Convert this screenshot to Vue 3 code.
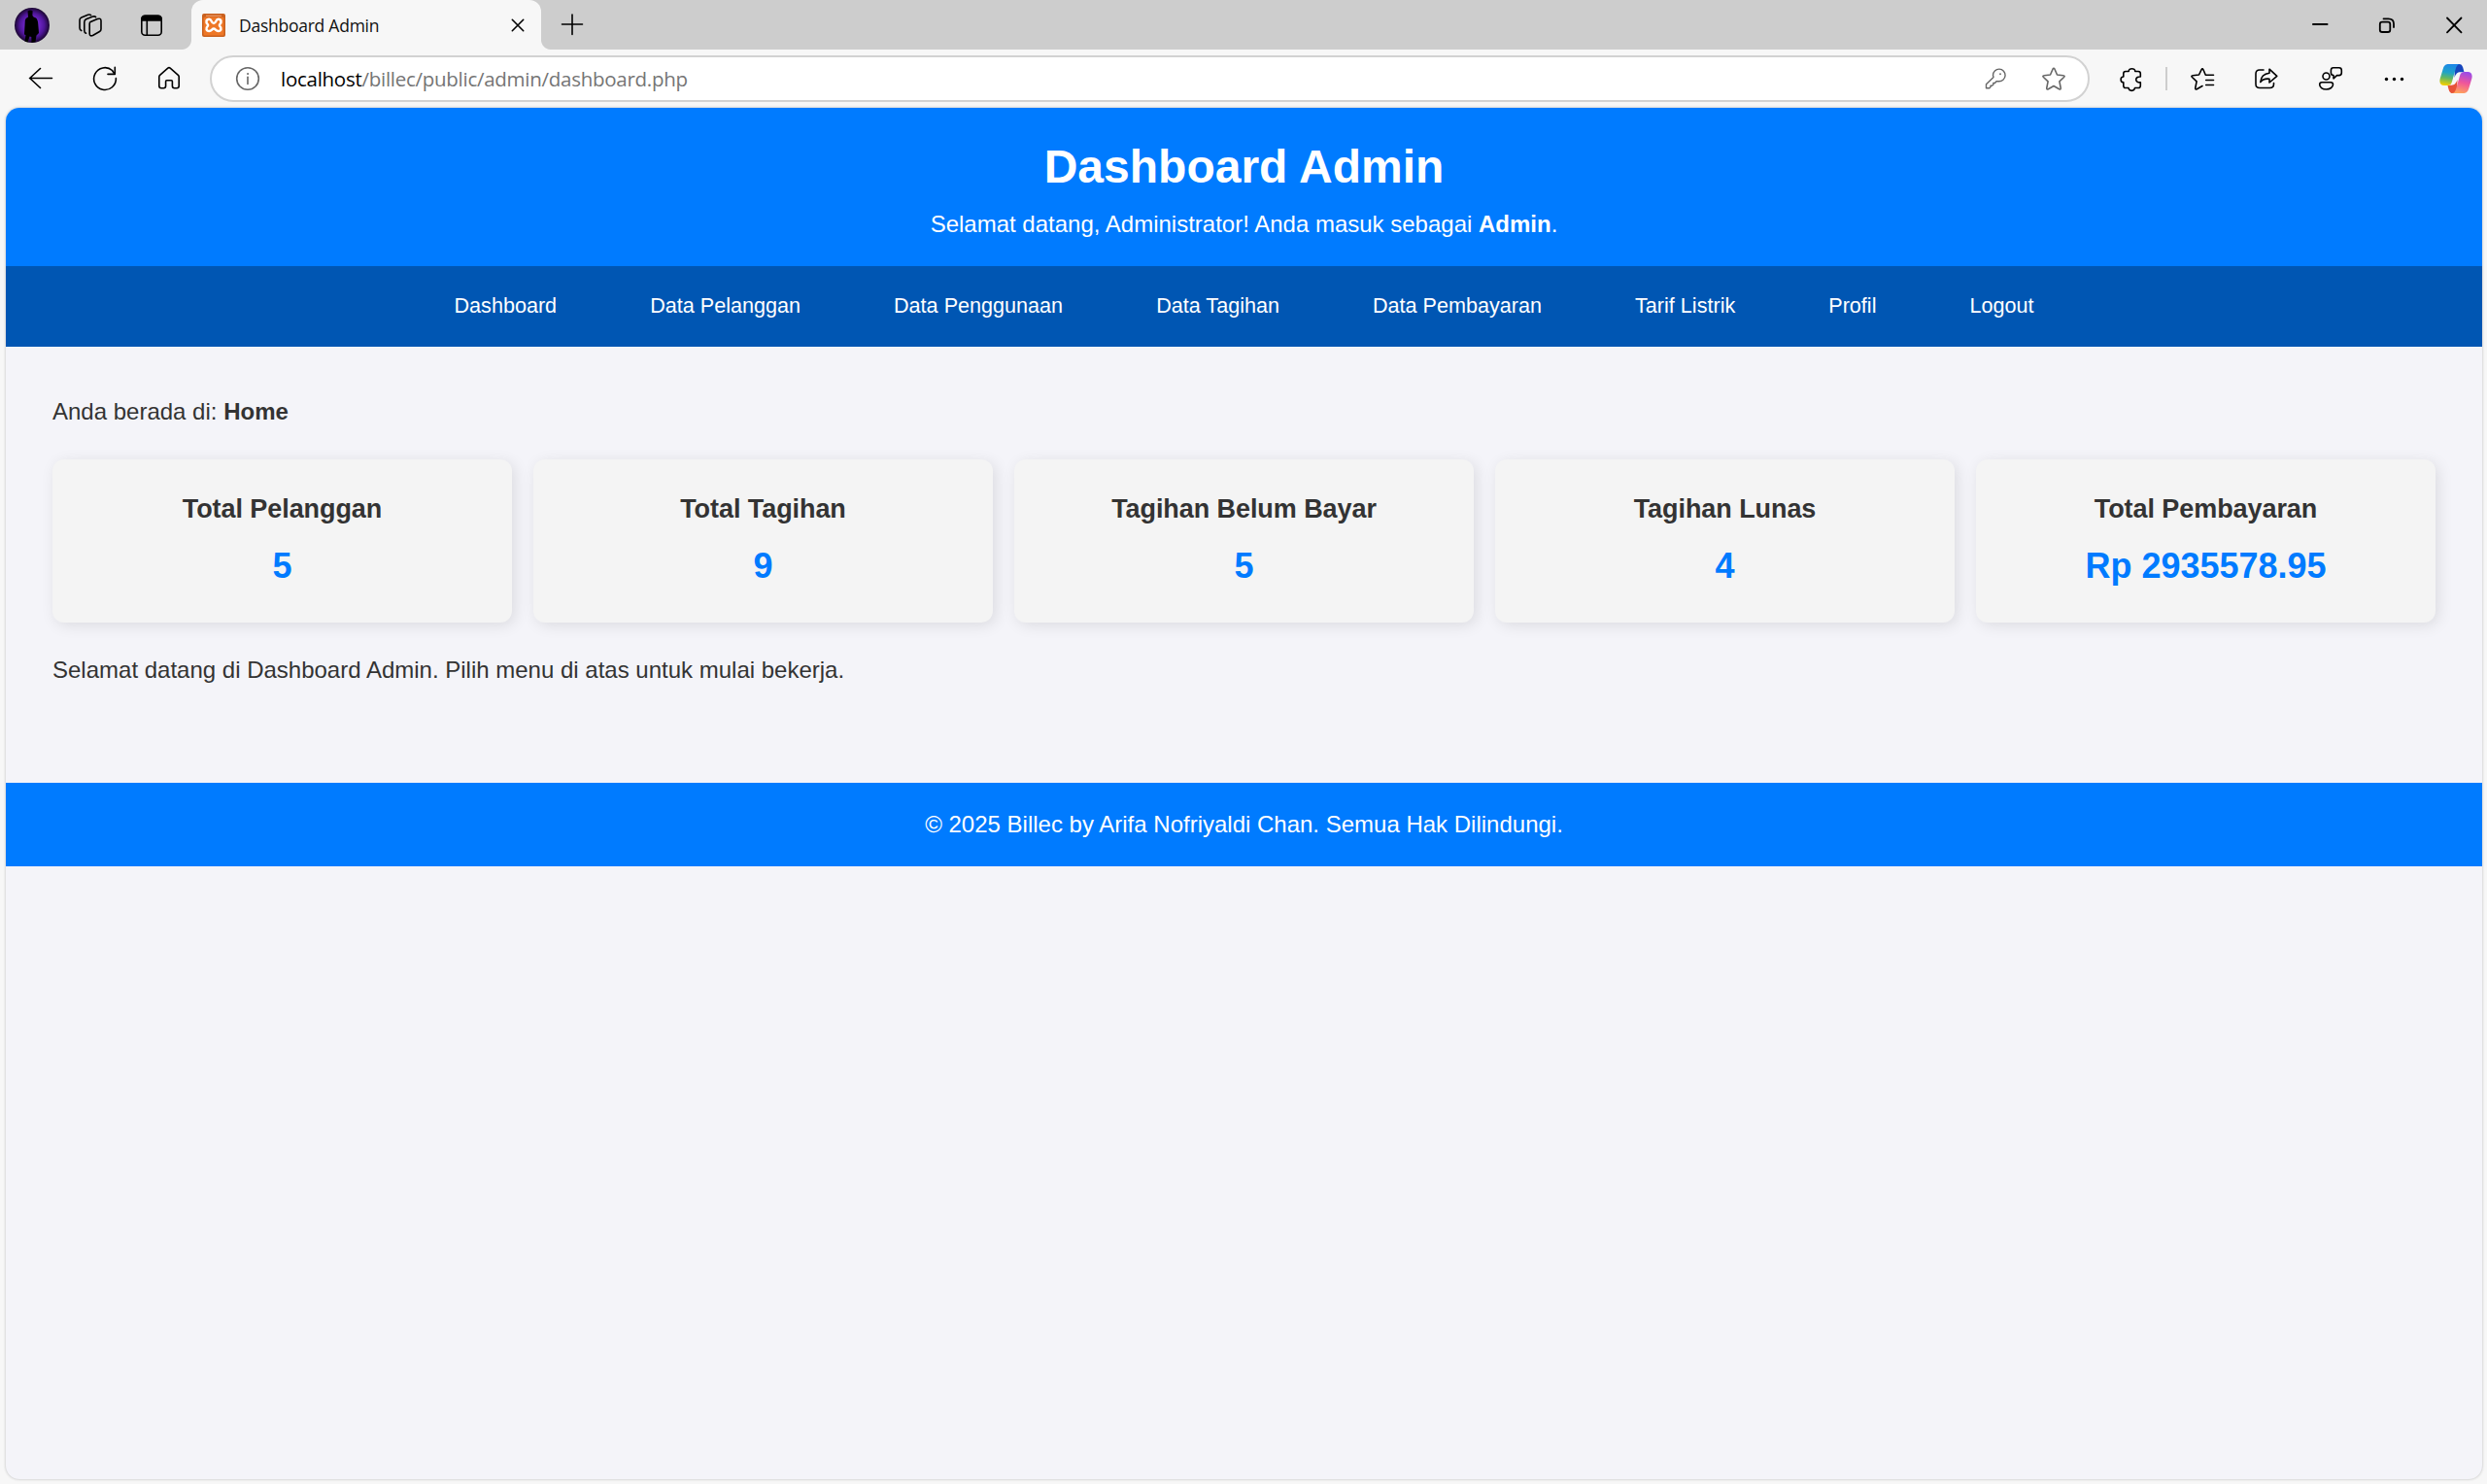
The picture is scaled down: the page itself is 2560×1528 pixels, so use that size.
<script setup>
const menu = [
  'Dashboard',
  'Data Pelanggan',
  'Data Penggunaan',
  'Data Tagihan',
  'Data Pembayaran',
  'Tarif Listrik',
  'Profil',
  'Logout',
]

const cards = [
  { title: 'Total Pelanggan', value: '5' },
  { title: 'Total Tagihan', value: '9' },
  { title: 'Tagihan Belum Bayar', value: '5' },
  { title: 'Tagihan Lunas', value: '4' },
  { title: 'Total Pembayaran', value: 'Rp 2935578.95' },
]
</script>

<template>
  <div class="window">
    <div class="tabstrip">
      <svg class="avatar" viewBox="0 0 36 36">
        <defs>
          <radialGradient id="aura" cx=".5" cy=".5" r=".5">
            <stop offset=".3" stop-color="#7a2bd6" />
            <stop offset=".7" stop-color="#4f1699" />
            <stop offset="1" stop-color="#1a0530" />
          </radialGradient>
        </defs>
        <circle cx="18" cy="18" r="18" fill="url(#aura)" />
        <path d="M13.500 3.500Q16 1.500 18.600 3.200L18.400 8Q19 9.500 22 10.500Q24 12 24.300 17L25 26L22.500 28.500L21.500 35L17.500 36L17.300 30L15.500 29.500L13.500 35.500L10.500 34.500L11.500 28L10 27.500L10.800 13Q11 10.500 14 9.500Z" fill="#000" />
      </svg>
      <svg class="icon workspaces" viewBox="0 0 30 30">
        <path d="M15.300 11.400 22.300 8.500Q26 7.300 26 10.500V19Q26 20.800 24.500 21.500L17.500 25.500Q14.200 26.800 14.200 23.500V13.500Q14.200 12 15.300 11.400Z" />
        <path d="M10.500 23.300Q8.800 22.800 8.800 20.500V12Q8.800 9.700 10.600 8.800L17.500 6.100Q19.600 5.400 20.600 6.600" />
        <path d="M5.800 20.600Q4 20 4 17.800V9.700Q4 7.700 5.800 6.900L12.500 4.300Q14.400 3.700 15.600 4.600" />
      </svg>
      <svg class="icon sidebar" viewBox="0 0 30 30">
        <rect x="4.800" y="5.300" width="20.400" height="20" rx="3.500" />
        <path d="M4.800 10V9Q4.800 5.300 8.500 5.300H21.500Q25.200 5.300 25.200 9V10Z" fill="#000" />
        <path d="M10.300 10V25" />
      </svg>
      <div class="tab">
        <svg class="favicon" viewBox="0 0 24 24">
          <rect width="24" height="24" rx="2" fill="#c9611f" />
          <rect x="1.500" y="3.500" width="21" height="19" rx="1.500" fill="#ee7726" />
          <path d="M4 2.200H20" stroke="#f2a678" stroke-width="1" />
          <path d="M7.300 5.700C4.200 5.700 3.500 9 5.800 11.200Q6.500 12 5.800 12.800C3.500 15 4.300 18 7.300 18C9.800 18 10.300 15.500 12 15.500S14.200 18 16.700 18C19.700 18 20.500 15 18.200 12.800Q17.500 12 18.200 11.200C20.500 9 19.800 5.700 16.700 5.700C13.800 5.700 14.800 10 12 10S10.200 5.700 7.300 5.700Z" fill="none" stroke="#fff" stroke-width="2.500" stroke-linejoin="round" />
        </svg>
        <span class="tab-title">Dashboard Admin</span>
        <svg class="icon tab-close" viewBox="0 0 30 30"><path d="M9.300 9.300 20.700 20.700M20.700 9.300 9.300 20.700" /></svg>
      </div>
      <svg class="icon new-tab" viewBox="0 0 30 30"><path d="M4.500 14H25.500M15 4V24.500" /></svg>
      <div class="spacer"></div>
      <svg class="icon control" viewBox="0 0 30 30"><path d="M7 14H21.500" stroke-width="2" /></svg>
      <svg class="icon control" viewBox="0 0 30 30">
        <rect x="6.800" y="11.700" width="10.500" height="10.300" rx="2.300" stroke-width="1.800" />
        <path d="M10.500 8.300H15.500Q21 8.300 21 13.500V17" stroke-width="1.800" />
      </svg>
      <svg class="icon control" viewBox="0 0 30 30"><path d="M7 7.500 21.500 22.300M21.500 7.500 7 22.300" stroke-width="1.800" /></svg>
    </div>

    <div class="toolbar">
      <svg class="icon" viewBox="0 0 30 30"><path d="M3.500 14.500H26.500M14.500 4.500 3.700 14.500 14.500 24.500" /></svg>
      <svg class="icon" viewBox="0 0 30 30">
        <path d="M26.400 14.500A11.400 11.400 0 1 1 22.500 6.500L25 10.200" />
        <path d="M25.300 3.300V10.400H18" />
      </svg>
      <svg class="icon" viewBox="0 0 30 30">
        <path d="M4.800 13Q4.800 12 5.600 11.300L13.800 4.200Q15 3.200 16.200 4.200L24.400 11.300Q25.200 12 25.200 13V22.500Q25.200 24.700 23 24.700H20.500Q18.400 24.700 18.400 22.500V17.800Q18.400 16.700 17.300 16.700H12.700Q11.600 16.700 11.600 17.800V22.500Q11.600 24.700 9.500 24.700H7Q4.800 24.700 4.800 22.500Z" />
      </svg>
      <div class="address">
        <svg class="icon muted" viewBox="0 0 30 30">
          <circle cx="15" cy="15" r="11.300" />
          <path d="M15 13.300V20.500" />
          <circle cx="15" cy="10" r=".6" fill="#666" stroke-width=".8" />
        </svg>
        <div class="url"><span class="host">localhost</span>/billec/public/admin/dashboard.php</div>
        <svg class="icon muted key" viewBox="0 0 30 30">
          <path d="M12.500 11.500A6.300 6.300 0 1 1 18.200 17.700L16 17.800 14.500 19.500H12.800V21.300L11.500 22.300H10V23.500L8.800 24.700H5.500V20.800L13 13.500Z" stroke-width="1.400" />
          <circle cx="20" cy="10.300" r="1" fill="#777" stroke="none" />
        </svg>
        <svg class="icon muted" viewBox="0 0 30 30">
          <path d="M14 5.200Q15 3.500 16 5.200L18.500 11 24.800 11.700Q27 12 25.500 13.500L20.900 17.900 22.200 24.500Q22.400 26.500 20.600 25.700L15 22.500 9.400 25.700Q7.600 26.500 7.800 24.500L9.100 17.900 4.500 13.500Q3 12 5.200 11.700L11.500 11Z" />
        </svg>
      </div>
      <svg class="icon puzzle" viewBox="0 0 30 30">
        <path d="M9 7.500H12.200C12 3.800 19 3.800 18.800 7.500H22Q24.300 7.500 24.300 9.800V13C18.200 12.500 18.200 19.300 24.300 18.800V22.200Q24.300 24.500 22 24.500H18.500C18 28.300 12.500 28.300 12 24.500H9Q6.800 24.500 6.800 22.200V18.800C3.200 18.800 3.200 13 6.800 13V9.800Q6.800 7.500 9 7.500Z" />
      </svg>
      <div class="divider"></div>
      <svg class="icon" viewBox="0 0 30 30">
        <path d="M15 22.500 9.400 25.700Q7.600 26.500 7.800 24.500L9.100 17.900 4.500 13.500Q3 12 5.200 11.700L11.500 11 14 5.800Q15 4 16 5.800L18.300 11.300H26.500M18.700 16.500H26.500M18.700 21.500H26.500" />
      </svg>
      <svg class="icon share" viewBox="0 0 30 30">
        <path d="M12 6H8Q4 6 4 10V20.500Q4 24.500 8 24.500H18.500Q22.500 24.500 22.500 20.500V19.500" />
        <path d="M18 5.200 25.800 12.300 18 19V15.200Q11.500 14.500 8.800 18.500Q9.500 10.300 18 9.300Z" />
      </svg>
      <svg class="icon feedback" viewBox="0 0 30 30">
        <circle cx="10.500" cy="12.500" r="3.500" />
        <path d="M6 18.700H15Q17.500 18.700 17.500 21C17.500 23.700 14.500 26 10.500 26S3.700 23.700 3.700 21Q3.700 18.700 6 18.700Z" />
        <path d="M17.800 3.800H23.700Q26.300 3.800 26.300 6.400V9Q26.300 11.600 23.700 11.600H21.500L18 14.800V11.600Q15.400 11.400 15.400 9V6.400Q15.400 3.800 17.800 3.800Z" />
      </svg>
      <svg class="icon more" viewBox="0 0 30 30">
        <g fill="#000" stroke="none"><circle cx="6.500" cy="15.500" r="1.700" /><circle cx="14.500" cy="15.500" r="1.700" /><circle cx="22.500" cy="15.500" r="1.700" /></g>
      </svg>
      <svg class="copilot" viewBox="0 0 34 30">
        <defs>
          <linearGradient id="cool" x1=".5" y1="0" x2=".35" y2="1">
            <stop offset="0" stop-color="#1c86e8" /><stop offset=".4" stop-color="#1fa3c8" />
            <stop offset=".65" stop-color="#5fb767" /><stop offset="1" stop-color="#f5d000" />
          </linearGradient>
          <linearGradient id="warm" x1=".65" y1="0" x2=".4" y2="1">
            <stop offset="0" stop-color="#9a4be8" /><stop offset=".5" stop-color="#f0569a" />
            <stop offset="1" stop-color="#ffa35c" />
          </linearGradient>
        </defs>
        <path d="M16 0H20.500C23.500 0 24.300 3 25.500 8.300H21.500C18.500 8.300 17 10 15.500 14Z" fill="#1746bd" />
        <path d="M18 30H13.500C10.500 30 9.700 27 8.500 21.700H12.500C15.500 21.700 17 20 18.500 16Z" fill="#e85338" />
        <path d="M9.500 0H21.500C18.700 0 17.500 2 16.700 5L13 18C12.100 21 10.800 22 8 22H5C1 22-.3 19 .7 15L3.700 5C4.800 1.200 6.800 0 9.500 0Z" fill="url(#cool)" />
        <path d="M24.500 30H12.500C15.300 30 16.500 28 17.300 25L21 12C21.900 9 23.200 8 26 8H29C33 8 34.300 11 33.300 15L30.300 25C29.200 28.800 27.200 30 24.500 30Z" fill="url(#warm)" />
      </svg>
    </div>

    <div class="page">
      <header class="hero">
        <h1>Dashboard Admin</h1>
        <p>Selamat datang, Administrator! Anda masuk sebagai <strong>Admin</strong>.</p>
      </header>
      <nav class="menu">
        <a v-for="item in menu" :key="item">{{ item }}</a>
      </nav>
      <main class="content">
        <p class="crumb">Anda berada di: <strong>Home</strong></p>
        <div class="cards">
          <section v-for="card in cards" :key="card.title" class="card">
            <h3>{{ card.title }}</h3>
            <p>{{ card.value }}</p>
          </section>
        </div>
        <p class="welcome">Selamat datang di Dashboard Admin. Pilih menu di atas untuk mulai bekerja.</p>
      </main>
      <footer class="footer">© 2025 Billec by Arifa Nofriyaldi Chan. Semua Hak Dilindungi.</footer>
    </div>
  </div>
</template>

<style>
body {
  margin: 0;
  background: #f7f7f7;
}
</style>

<style scoped>
* {
  box-sizing: border-box;
}
h1,
h3,
p {
  margin: 0;
}
.window {
  display: flex;
  flex-direction: column;
  width: 2560px;
  height: 1528px;
  background: #f7f7f7;
  overflow: hidden;
}
.icon {
  flex: none;
  width: 30px;
  height: 30px;
  fill: none;
  stroke: #000;
  stroke-width: 1.6;
  stroke-linecap: round;
  stroke-linejoin: round;
}
.muted {
  stroke: #666;
}

/* Tab strip */
.tabstrip {
  display: flex;
  align-items: center;
  height: 51px;
  padding: 0 18px 0 15px;
  background: #cdcdcd;
}
.avatar {
  flex: none;
  width: 36px;
  height: 36px;
}
.workspaces {
  margin-left: 27px;
}
.sidebar {
  margin-left: 33px;
}
.tab {
  position: relative;
  display: flex;
  align-items: center;
  width: 360px;
  height: 51px;
  margin-left: 26px;
  padding: 0 8px 0 11px;
  border-radius: 12px 12px 0 0;
  background: #f7f7f7;
}
.tab::before,
.tab::after {
  content: '';
  position: absolute;
  bottom: 0;
  width: 10px;
  height: 10px;
}
.tab::before {
  left: -10px;
  background: radial-gradient(circle at 0 0, #cdcdcd 9.5px, #f7f7f7 10.5px);
}
.tab::after {
  right: -10px;
  background: radial-gradient(circle at 100% 0, #cdcdcd 9.5px, #f7f7f7 10.5px);
}
.favicon {
  flex: none;
  width: 24px;
  height: 24px;
}
.tab-title {
  flex: 1;
  margin-left: 14px;
  font: 17.5px/24px 'Open Sans', sans-serif;
  letter-spacing: -0.25px;
  color: #111;
}
.tab-close {
  margin-right: 1px;
}
.new-tab {
  margin-left: 17px;
}
.spacer {
  flex: 1;
}
.control + .control {
  margin-left: 39px;
}

/* Toolbar */
.toolbar {
  display: flex;
  align-items: center;
  height: 60px;
  padding: 0 15px 0 27px;
}
.toolbar > .icon + .icon {
  margin-left: 36px;
}
.address {
  flex: 1;
  display: flex;
  align-items: center;
  height: 48px;
  margin: 0 28px 0 27px;
  padding: 0 20px 0 22px;
  border: 2px solid #d2d2d2;
  border-radius: 24px;
  background: #fff;
}
.url {
  flex: 1;
  margin-left: 19px;
  font: 20.5px/30px 'Open Sans', sans-serif;
  letter-spacing: -0.27px;
  color: #757575;
}
.host {
  color: #000;
}
.key {
  margin-right: 30px;
}
.divider {
  width: 2px;
  height: 24px;
  margin: 0 21px 0 20px;
  background: #cdcdcd;
}
.toolbar > .share + .feedback {
  margin-left: 36px;
}
.copilot {
  flex: none;
  width: 34px;
  height: 30px;
  margin-left: 31px;
}

/* Web page */
.page {
  width: 2549px;
  height: 1412px;
  margin: 0 5px 0 6px;
  border-radius: 14px;
  background: #f4f4f9;
  box-shadow: 0 0 3px rgba(0, 0, 0, 0.25);
  overflow: hidden;
  font-family: 'Liberation Sans', Arial, sans-serif;
  font-size: 24px;
  line-height: 28px;
  color: #333;
}
.hero {
  height: 163px;
  padding-top: 33px;
  background: #007bff;
  color: #fff;
  text-align: center;
}
.hero h1 {
  font-size: 48px;
  line-height: 56px;
}
.hero p {
  margin-top: 17px;
}
.menu {
  display: flex;
  justify-content: center;
  gap: 96px;
  height: 83px;
  padding-top: 28px;
  background: #0056b3;
  color: #fff;
  font-size: 21.6px;
  line-height: 26px;
}
.content {
  height: 449px;
  padding: 53px 48px 0;
}
.cards {
  display: grid;
  grid-template-columns: repeat(5, 1fr);
  gap: 22px;
  margin-top: 35px;
}
.card {
  height: 168px;
  padding-top: 35px;
  border-radius: 12px;
  background: #f4f4f4;
  box-shadow: 3px 3px 15px rgba(0, 0, 0, 0.1);
  text-align: center;
}
.card h3 {
  font-size: 27px;
  line-height: 32px;
  letter-spacing: -0.07px;
}
.card p {
  margin-top: 22px;
  font-size: 36px;
  font-weight: bold;
  line-height: 42px;
  color: #007bff;
}
.welcome {
  margin-top: 35px;
}
.footer {
  height: 86px;
  padding-top: 29px;
  background: #007bff;
  color: #fff;
  text-align: center;
}
</style>
